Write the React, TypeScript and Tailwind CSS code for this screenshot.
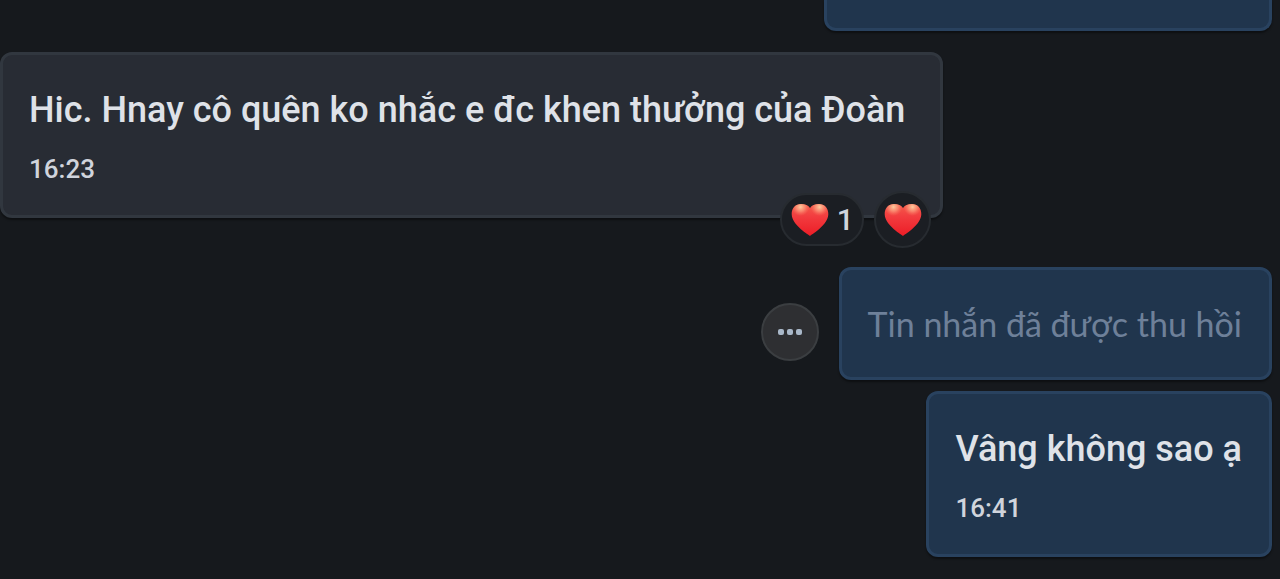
import type { ReactNode } from "react";

function Heart({ id }: { id: string }) {
  return (
    <svg viewBox="0 0 38 34" className="h-[34px] w-[38px] shrink-0" aria-hidden="true">
      <defs>
        <linearGradient id={id} x1="0" y1="0" x2="0" y2="1">
          <stop offset="0" stopColor="#f4604d" />
          <stop offset="0.4" stopColor="#f23c3f" />
          <stop offset="1" stopColor="#ec1b25" />
        </linearGradient>
        <radialGradient id={`${id}-shine`}>
          <stop offset="0" stopColor="#ffd9a8" stopOpacity="0.9" />
          <stop offset="0.5" stopColor="#ffb08a" stopOpacity="0.55" />
          <stop offset="1" stopColor="#ff8068" stopOpacity="0" />
        </radialGradient>
        <clipPath id={`${id}-clip`}>
          <path d="M19 33C15 30 1 21.500 .7 11.300C.5 5 4.800 1 10 1C14 1 17.500 2.500 19 5C20.500 2.500 24 1 28 1C33.200 1 37.500 5 37.300 11.300C37 21.500 23 30 19 33Z" />
        </clipPath>
      </defs>
      <g clipPath={`url(#${id}-clip)`}>
        <rect width="38" height="34" fill={`url(#${id})`} />
        <ellipse cx="9.500" cy="4" rx="9" ry="9" fill={`url(#${id}-shine)`} />
        <ellipse cx="28.500" cy="4" rx="9" ry="9" fill={`url(#${id}-shine)`} />
      </g>
    </svg>
  );
}

function Bubble({ own = false, time, children }: { own?: boolean; time?: string; children: ReactNode }) {
  return (
    <div
      className={`rounded-xl border-[3px] pb-[30px] shadow-[0_2px_2px_rgba(0,0,0,0.4)] ${time ? "pt-8" : "pt-[30px]"} ${
        own ? "border-[#29425f] bg-[#20354d] pr-[27px] pl-[26px]" : "border-[#31373f] bg-[#282c34] pr-[35px] pl-[26px]"
      }`}
    >
      {children}
      {time && <time className="mt-[19px] block text-[26px] leading-8 font-medium text-[#d0d4dc]">{time}</time>}
    </div>
  );
}

export default function App() {
  return (
    <main className="flex min-h-screen flex-col overflow-hidden bg-[#16191d] pr-2 pb-[22px] font-['Roboto',sans-serif] text-[36px] leading-[47px] font-medium text-[#dfe2e8]">
      <div className="h-[31px] w-[448px] self-end rounded-b-xl border-[3px] border-t-0 border-[#29425f] bg-[#20354d] shadow-[0_2px_2px_rgba(0,0,0,0.4)]" />

      <article className="relative mt-[21px] self-start">
        <Bubble time="16:23">
          <p className="whitespace-nowrap">Hic. Hnay cô quên ko nhắc e đc khen thưởng của Đoàn</p>
        </Bubble>
        <div className="absolute right-3 -bottom-[30px] flex items-center gap-[10px]">
          <button
            type="button"
            aria-label="1 lượt thích"
            className="flex h-[53px] w-[84px] items-center justify-center gap-2 rounded-full border-2 border-[#272b30] bg-[#1b1e23] text-[30px] leading-8 text-[#d0d4dc]"
          >
            <Heart id="heart-count" />
            <span>1</span>
          </button>
          <button
            type="button"
            aria-label="Thả tim"
            className="flex size-[57px] items-center justify-center rounded-full border-2 border-[#272b30] bg-[#1b1e23]"
          >
            <Heart id="heart-add" />
          </button>
        </div>
      </article>

      <article className="mt-[49px] flex items-center gap-5 self-end">
        <button
          type="button"
          aria-label="Thêm"
          className="mt-4 flex size-[58px] items-center justify-center gap-[3px] rounded-full border-2 border-[#3b3e41] bg-[#2e2f32]"
        >
          <span className="size-[6px] rounded-xs bg-[#a9b8c9]" />
          <span className="size-[6px] rounded-xs bg-[#a9b8c9]" />
          <span className="size-[6px] rounded-xs bg-[#a9b8c9]" />
        </button>
        <Bubble own>
          <p className="font-['Lato',sans-serif] text-[34px] font-normal whitespace-nowrap text-[#6e8099]">
            Tin nhắn đã được thu hồi
          </p>
        </Bubble>
      </article>

      <article className="mt-[11px] self-end">
        <Bubble own time="16:41">
          <p className="whitespace-nowrap">Vâng không sao ạ</p>
        </Bubble>
      </article>
    </main>
  );
}
